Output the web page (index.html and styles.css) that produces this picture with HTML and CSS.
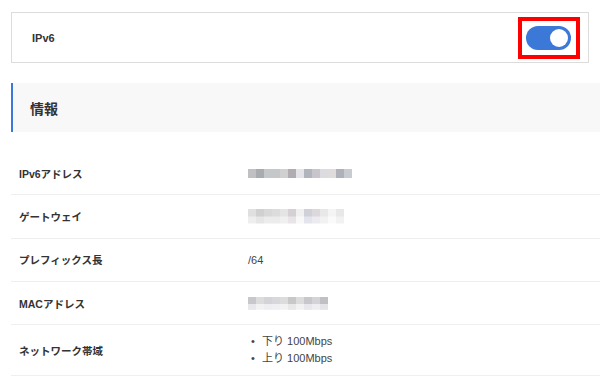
FILE: index.html
```html
<!DOCTYPE html>
<html lang="ja">
<head>
    <meta charset="UTF-8">
    <meta name="viewport" content="width=device-width, initial-scale=1.0">
    <title>IPv6</title>
    <link rel="stylesheet" href="styles.css">
</head>
<body>
    <div class="page">
        <!-- IPv6 切り替え -->
        <div class="switch-card">
            <span class="switch-label">IPv6</span>
            <div class="highlight">
                <span class="toggle on"><span class="knob"></span></span>
            </div>
        </div>

        <!-- 情報 -->
        <div class="info">
            <h2 class="info-title">情報</h2>

            <div class="info-row">
                <div class="info-label">IPv6アドレス</div>
                <div class="info-value"><span class="blur blur-ipv6"></span></div>
            </div>
            <div class="info-row">
                <div class="info-label">ゲートウェイ</div>
                <div class="info-value"><span class="blur blur-gateway"></span></div>
            </div>
            <div class="info-row">
                <div class="info-label">プレフィックス長</div>
                <div class="info-value">/64</div>
            </div>
            <div class="info-row">
                <div class="info-label">MACアドレス</div>
                <div class="info-value"><span class="blur blur-mac"></span></div>
            </div>
            <div class="info-row tall">
                <div class="info-label">ネットワーク帯域</div>
                <div class="info-value">
                    <ul class="bandwidth">
                        <li>下り 100Mbps</li>
                        <li>上り 100Mbps</li>
                    </ul>
                </div>
            </div>
        </div>
    </div>
</body>
</html>
```

FILE: styles.css
```css
body {
    margin: 0;
    font-family: "Liberation Sans", Arial, "Noto Sans CJK JP", sans-serif;
    color: #333;
    background-color: #fff;
    overflow: hidden;
}

.page {
    padding: 12px 0 0 11px;
}

/* IPv6 切り替え */
.switch-card {
    width: 578px;
    height: 51px;
    box-sizing: border-box;
    border: 1px solid #dcdcdc;
    display: flex;
    align-items: center;
    justify-content: space-between;
    padding: 0 8px 0 20px;
}

.switch-label {
    font-size: 11px;
    font-weight: bold;
}

.highlight {
    border: 4px solid #ff0000;
    padding: 5px 5px 5px 4px;
    display: flex;
}

.toggle {
    width: 45px;
    height: 24px;
    border-radius: 12px;
    background-color: #3b78d8;
    display: flex;
    align-items: center;
    justify-content: flex-end;
    padding: 0 3px;
    box-sizing: border-box;
}

.toggle .knob {
    width: 18px;
    height: 18px;
    border-radius: 50%;
    background-color: #fff;
}

/* 情報 */
.info {
    margin-top: 20px;
}

.info-title {
    margin: 0 0 20px;
    height: 49px;
    box-sizing: border-box;
    background-color: #f8f8f8;
    border-left: 2px solid #3b78d8;
    padding-left: 17px;
    display: flex;
    align-items: center;
    font-size: 14px;
    font-weight: bold;
    color: #333;
}

.info-row {
    display: flex;
    align-items: center;
    height: 43.3px;
    box-sizing: border-box;
    border-bottom: 1px solid #efefef;
    padding-left: 8px;
}

.info-row.tall {
    height: 51px;
}

.info-label {
    width: 229px;
    font-size: 10.5px;
    font-weight: bold;
    color: #333;
}

.info-value {
    font-size: 11px;
    color: #444;
}

.bandwidth {
    margin: 0;
    padding: 0 0 0 3px;
    list-style: none;
    line-height: 17px;
}

.bandwidth li::before {
    content: "•";
    display: inline-block;
    width: 11px;
}

/* ぼかし */
.blur {
    display: block;
}

.blur-ipv6 {
    width: 104px;
    height: 9px;
    background: linear-gradient(to right,
        #c0c0c2 0 8px, #a8acae 8px 16px, #c4c8c8 16px 32px, #d0d0d0 32px 40px,
        #b0acb0 40px 48px, #e4e4e8 48px 56px, #b0b4bc 56px 64px, #c8c4cc 64px 72px,
        #dcdce0 72px 80px, #e0dcdc 80px 88px, #b0b0b8 88px 96px, #c8ccd0 96px 104px);
}

.blur-gateway {
    width: 96px;
    height: 15px;
    background:
        linear-gradient(to right,
            #e0e0e0 0 8px, #d0d0d0 8px 16px, #d8d8d8 16px 24px, #dcdcdc 24px 32px,
            #e4e4e4 32px 40px, #d4d0d4 40px 48px, #f0f0f0 48px 56px, #d0d0d8 56px 64px,
            #dcd8dc 64px 72px, #e8e8e8 72px 80px, #f4f4f4 80px 88px, #e8e8e8 88px 96px)
            top / 100% 50% no-repeat,
        linear-gradient(to right,
            #eeeeee 0 8px, #e6e6e6 8px 16px, #ececec 16px 32px,
            #f0f0f0 32px 40px, #e8e4e8 40px 48px, #f8f8f8 48px 56px, #e4e4ec 56px 64px,
            #ececf0 64px 72px, #f2f2f2 72px 80px, #fafafa 80px 88px, #f2f2f2 88px 96px)
            bottom / 100% 50% no-repeat;
}

.blur-mac {
    width: 80px;
    height: 13px;
    background:
        linear-gradient(to right,
            #c8c8cc 0 8px, #dcdcdc 8px 16px, #d4d4d8 16px 24px, #d8d8dc 24px 32px,
            #dcdcdc 32px 40px, #c8c8c8 40px 48px, #dcdcdc 48px 56px, #c8c8cc 56px 64px,
            #d4d4d8 64px 72px, #c0c0c4 72px 80px)
            top / 100% 55% no-repeat,
        linear-gradient(to right,
            #e8e8ec 0 8px, #f2f2f2 8px 16px, #eeeef0 16px 24px, #f0f0f2 24px 32px,
            #f2f2f2 32px 40px, #e8e8e8 40px 48px, #f2f2f2 48px 56px, #e8e8ec 56px 64px,
            #eeeef0 64px 72px, #e4e4e8 72px 80px)
            bottom / 100% 45% no-repeat;
}
```
